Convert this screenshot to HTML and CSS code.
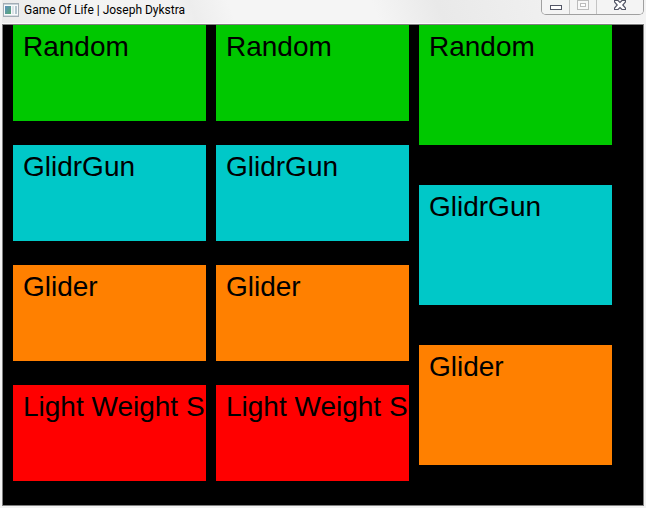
FILE: index.html
```html
<!DOCTYPE html>
<html lang="en">
<head>
<meta charset="utf-8">
<title>Game Of Life | Joseph Dykstra</title>
<link rel="stylesheet" href="styles.css">
</head>
<body>
<div class="window">
  <header class="titlebar">
    <svg class="app-icon" width="16" height="14" viewBox="0 0 16 14" aria-hidden="true">
      <defs>
        <linearGradient id="pane" x1="0" y1="0" x2="1" y2="1">
          <stop offset="0" stop-color="#5f8fc0"/>
          <stop offset="1" stop-color="#58a873"/>
        </linearGradient>
      </defs>
      <rect x=".5" y=".5" width="15" height="13" fill="#f8fafb" stroke="#a3adb5"/>
      <rect x="1" y="1" width="14" height="1" fill="#c9d3da"/>
      <rect x="2" y="3" width="6" height="8" fill="url(#pane)"/>
      <rect x="9" y="3" width="2" height="8" fill="#dce3e8"/>
      <rect x="12" y="3" width="2" height="8" fill="#b5c5cf"/>
      <rect x="1" y="12" width="14" height="1" fill="#d5dce1"/>
    </svg>
    <h1 class="title">Game Of Life | Joseph Dykstra</h1>
    <div class="controls">
      <button class="control minimize" type="button" aria-label="Minimize">
        <svg width="12" height="5" viewBox="0 0 12 5"><rect x=".5" y=".5" width="11" height="4" fill="#fff" stroke="#535666"/></svg>
      </button>
      <button class="control maximize" type="button" aria-label="Maximize" disabled>
        <svg width="12" height="10" viewBox="0 0 12 10"><rect x=".5" y=".5" width="11" height="9" fill="#f8f8f8" stroke="#bcbcbc"/><rect x="3.5" y="3.5" width="5" height="3" fill="#fff" stroke="#bcbcbc"/></svg>
      </button>
      <button class="control close" type="button" aria-label="Close">
        <svg width="12" height="10" viewBox="0 0 12 10"><path d="M.5.5H4L6 2.500 8 .5H11.500V2L8.800 5 11.500 8V9.500H8L6 7.500 4 9.500H.5V8L3.200 5 .5 2Z" fill="#fff" stroke="#535666" stroke-width="1.200"/></svg>
      </button>
    </div>
  </header>
  <main class="board">
    <div class="column">
      <button class="tile random" type="button">Random</button>
      <button class="tile gun" type="button">GlidrGun</button>
      <button class="tile glider" type="button">Glider</button>
      <button class="tile ship" type="button">Light Weight S</button>
    </div>
    <div class="column">
      <button class="tile random" type="button">Random</button>
      <button class="tile gun" type="button">GlidrGun</button>
      <button class="tile glider" type="button">Glider</button>
      <button class="tile ship" type="button">Light Weight S</button>
    </div>
    <div class="column tall">
      <button class="tile random" type="button">Random</button>
      <button class="tile gun" type="button">GlidrGun</button>
      <button class="tile glider" type="button">Glider</button>
    </div>
  </main>
</div>
</body>
</html>
```
FILE: styles.css
```css
* {
  box-sizing: border-box;
}

body {
  margin: 0;
  background: #f3f3f3;
}

.window {
  padding: 0 2px 2px;
}

.titlebar {
  display: flex;
  align-items: flex-start;
  height: 24px;
  border-bottom: 1px solid #fafafa;
  background: linear-gradient(70deg, #eaeaea, #f4f4f4 15%, #f2f2f2 27%, #ededed 30%, #f5f5f5 36%, #f5f5f5 58%, #e9e9e9 68%, #f0f0f0 85%, #f3f3f3);
}

.app-icon {
  margin: 3px 0 0 1px;
}

.title {
  flex: 1;
  margin: 0 0 0 5px;
  font: 12px/20px Roboto, "Open Sans", sans-serif;
  color: #000;
  white-space: nowrap;
}

.controls {
  display: flex;
  height: 15px;
  border: 1px solid #a0a0a0;
  border-top: 0;
  border-radius: 0 0 5px 5px;
  overflow: hidden;
}

.control {
  display: flex;
  justify-content: center;
  align-items: flex-start;
  width: 27px;
  padding: 0;
  border: 0;
  border-right: 1px solid #c4c4c4;
  background: #f4f4f4;
}

.minimize {
  width: 28px;
  padding-top: 5px;
}

.close {
  width: 46px;
  border-right: 0;
}

.board {
  display: flex;
  gap: 10px;
  min-height: 482px;
  padding: 0 31px 24px 10px;
  border: 1px solid #808080;
  background: #000;
}

.column {
  display: flex;
  flex: 1;
  flex-direction: column;
  gap: 24px;
  min-width: 0;
}

.tall {
  gap: 40px;
}

.tile {
  display: flex;
  align-items: flex-start;
  height: 96px;
  padding: 6px 0 0 10px;
  border: 0;
  font: 28px/32px "Liberation Sans", Arial, sans-serif;
  color: #000;
  text-align: left;
  white-space: nowrap;
  overflow: hidden;
}

.tall .tile {
  height: 120px;
}

.random {
  background: #00c800;
}

.gun {
  background: #00c8c8;
}

.glider {
  background: #ff8000;
}

.ship {
  background: #f00;
}
```
